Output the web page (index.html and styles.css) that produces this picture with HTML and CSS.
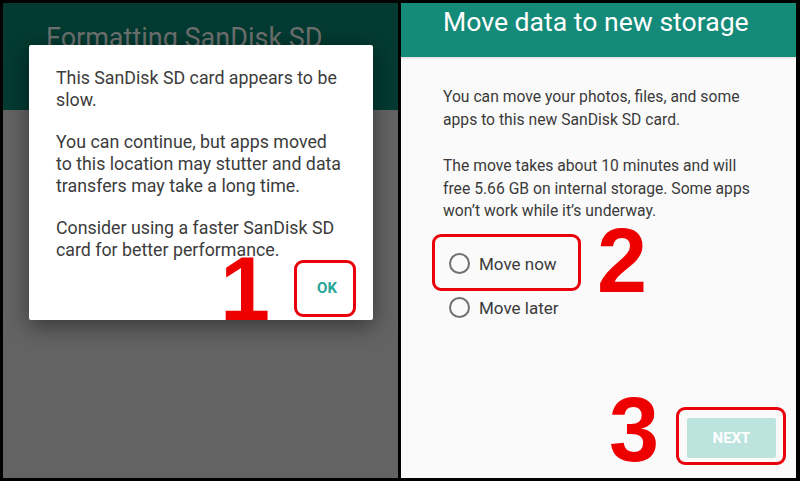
FILE: index.html
```html
<!DOCTYPE html>
<html>
<head>
<meta charset="utf-8">
<link rel="stylesheet" href="styles.css">
</head>
<body>
<div class="frame">
  <section class="panel panel-left">
    <header class="dim-header">
      <h1 class="dim-title">Formatting SanDisk SD</h1>
    </header>
    <div class="dim-body"></div>
    <div class="dialog">
      <div class="dialog-text">
        <p>This SanDisk SD card appears to be slow.</p>
        <p>You can continue, but apps moved to this location may stutter and data transfers may take a long time.</p>
        <p>Consider using a faster SanDisk SD card for better performance.</p>
      </div>
      <div class="dialog-actions">
        <button class="btn-flat">OK</button>
      </div>
    </div>
    <div class="mark mark-ok"></div>
    <span class="num num-1">1</span>
  </section>
  <section class="panel panel-right">
    <header class="app-header">
      <h1 class="app-title">Move data to new storage</h1>
    </header>
    <div class="content">
      <p>You can move your photos, files, and some apps to this new SanDisk SD card.</p>
      <p>The move takes about 10 minutes and will free 5.66 GB on internal storage. Some apps won’t work while it’s underway.</p>
      <div class="options">
        <label class="radio-row"><span class="radio"></span><span>Move now</span></label>
        <label class="radio-row"><span class="radio"></span><span>Move later</span></label>
      </div>
      <button class="btn-next">NEXT</button>
    </div>
    <div class="mark mark-now"></div>
    <span class="num num-2">2</span>
    <div class="mark mark-next"></div>
    <span class="num num-3">3</span>
  </section>
</div>
</body>
</html>
```
FILE: styles.css
```css
* { box-sizing: border-box; }
html, body { margin: 0; padding: 0; }
body {
  width: 800px;
  height: 481px;
  background: #000;
  font-family: Roboto, "Noto Sans", sans-serif;
  overflow: hidden;
}
.frame {
  display: flex;
  gap: 3px;
  height: 481px;
  padding: 3px 4px 3px 3px;
}
.panel {
  position: relative;
  flex: 1;
  display: flex;
  flex-direction: column;
  overflow: hidden;
}
/* left panel */
.dim-header {
  height: 107px;
  background: #033a31;
  padding: 20px 0 0 43px;
}
.dim-title {
  margin: 0;
  font-weight: 400;
  font-size: 27px;
  line-height: 30px;
  color: #6c706e;
  white-space: nowrap;
}
.dim-body {
  flex: 1;
  background: #636363;
}
.dialog {
  position: absolute;
  left: 26px;
  top: 42px;
  width: 344px;
  height: 275px;
  background: #fff;
  border-radius: 2px;
  box-shadow: 0 6px 22px rgba(0,0,0,0.45);
  display: flex;
  flex-direction: column;
  padding: 22px 30px 0 27px;
}
.dialog-text p {
  margin: 0 0 20px;
  font-size: 17.8px;
  line-height: 22px;
  color: #3c3c3c;
}
.dialog-text p:last-child { margin-bottom: 0; }
.dialog-actions {
  margin-top: auto;
  display: flex;
  justify-content: flex-end;
  margin-bottom: 14px;
  margin-right: -6px;
}
.btn-flat {
  border: 0;
  background: transparent;
  font-family: Roboto, sans-serif;
  font-weight: 700;
  font-size: 15px;
  color: #26a69a;
  height: 36px;
  padding: 0 12px;
}
.mark {
  position: absolute;
  border: 3px solid #e8000b;
  border-radius: 9px;
}
.mark-ok { left: 291px; top: 257px; width: 62px; height: 57px; }
.num {
  position: absolute;
  font-family: "Liberation Sans", Arial, sans-serif;
  font-weight: 700;
  font-size: 90px;
  line-height: 1;
  color: #ee0000;
}
.num-1 { left: 217px; top: 241px; }
/* right panel */
.app-header {
  height: 54px;
  background: #148a78;
  padding: 4px 0 0 42px;
  box-shadow: 0 1px 2px rgba(0,0,0,0.15);
  position: relative;
  z-index: 1;
}
.app-title {
  margin: 0;
  font-weight: 400;
  font-size: 26.6px;
  line-height: 30px;
  color: #fff;
  white-space: nowrap;
}
.content {
  flex: 1;
  background: #fafafa;
  padding: 29px 20px 20px 42px;
  display: flex;
  flex-direction: column;
}
.content p {
  margin: 0 0 24px;
  font-size: 15.7px;
  line-height: 22.5px;
  color: #3a3a3a;
  width: 310px;
}
.options {
  margin-top: -5px;
  margin-left: 6px;
}
.radio-row {
  display: flex;
  align-items: center;
  gap: 9px;
  height: 44px;
  font-size: 17px;
  color: #3a3a3a;
}
.radio {
  width: 21px;
  height: 21px;
  border: 2px solid #707070;
  border-radius: 50%;
}
.btn-next {
  margin-top: auto;
  align-self: flex-end;
  width: 89px;
  height: 40px;
  border: 0;
  border-radius: 2px;
  background: #bce3de;
  color: #fff;
  font-family: Roboto, sans-serif;
  font-weight: 700;
  font-size: 15px;
}
.mark-now { left: 31px; top: 231px; width: 149px; height: 57px; }
.num-2 { left: 196px; top: 213px; }
.mark-next { left: 275px; top: 404px; width: 110px; height: 58px; }
.num-3 { left: 208px; top: 382px; }
```
